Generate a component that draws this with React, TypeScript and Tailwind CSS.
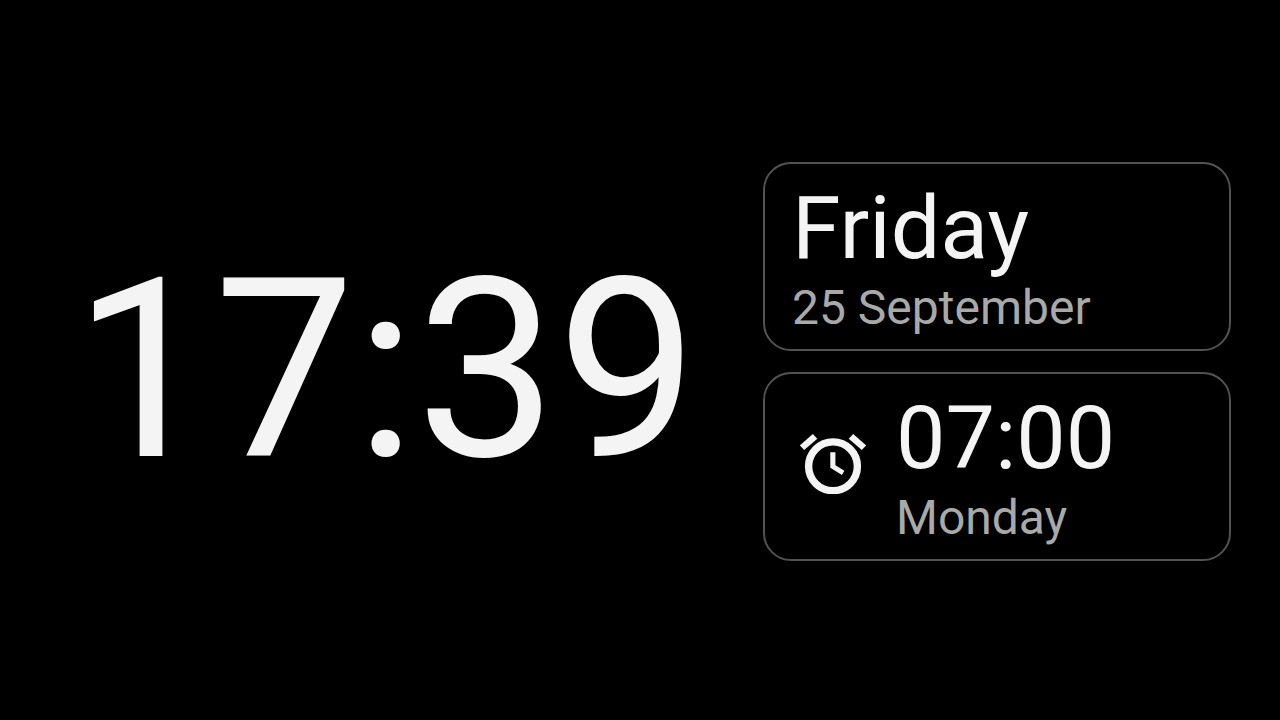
function AlarmIcon() {
  return (
    <svg viewBox="0 0 66 60" className="mb-1 h-[60px] w-[66px] shrink-0" aria-hidden="true">
      <g fill="#f4f4f4">
        <path d="M-0.2 11.4 12.8 0 17.3 4.7 4.2 16Z" />
        <path d="M66.2 11.4 53.2 0 48.7 4.7 61.8 16Z" />
        <path d="M30.3 18.3h5.1v12.9l9 5.5-2.5 4.2-11.6-7.1Z" />
      </g>
      <circle cx="33" cy="32.3" r="24.4" fill="none" stroke="#f4f4f4" strokeWidth="7.4" />
    </svg>
  );
}

export default function App() {
  return (
    <main className="flex min-h-screen items-center bg-black pl-[73px] pr-[49px] pt-[3px] font-['Roboto',sans-serif] text-[#f4f4f4]">
      <h1 className="flex-1 pt-4 text-[251px] leading-[300px]">
        <time dateTime="17:39">17:39</time>
      </h1>
      <div className="flex w-[468px] shrink-0 flex-col gap-[21px]">
        <section className="rounded-[28px] border-2 border-[#525252] px-[27px] pb-[13px] pt-3">
          <p className="text-[88px] leading-[104px]">Friday</p>
          <p className="text-[48px] leading-[56px] text-[#a9a9a9]">25 September</p>
        </section>
        <section className="flex items-center gap-[30px] rounded-[28px] border-2 border-[#525252] px-[35px] pb-[13px] pt-3">
          <AlarmIcon />
          <div>
            <p className="text-[88px] leading-[104px]">07:00</p>
            <p className="text-[48px] leading-[56px] text-[#a9a9a9]">Monday</p>
          </div>
        </section>
      </div>
    </main>
  );
}
